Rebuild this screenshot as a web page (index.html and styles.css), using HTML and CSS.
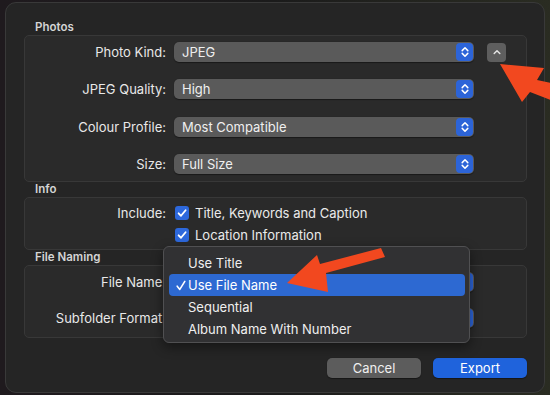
FILE: index.html
```html
<!DOCTYPE html>
<html lang="en">
<head>
    <meta charset="UTF-8">
    <title>Export</title>
    <link rel="stylesheet" href="styles.css">
</head>
<body>
    <div class="dialog">
        <div class="section-title">Photos</div>
        <div class="group photos">
            <div class="row">
                <span class="label">Photo Kind:</span>
                <div class="popup">JPEG<span class="stepper"><svg viewBox="0 0 8 12" width="8" height="12"><path d="M1.2 4.6 L4 1.8 L6.8 4.6 M1.2 7.4 L4 10.2 L6.8 7.4" fill="none" stroke="#fff" stroke-width="1.5" stroke-linecap="round" stroke-linejoin="round"/></svg></span></div>
                <div class="disclosure"><svg viewBox="0 0 8 6" width="8" height="6"><path d="M1.2 4.5 L4 1.7 L6.8 4.5" fill="none" stroke="#e4e4e4" stroke-width="1.5" stroke-linecap="round" stroke-linejoin="round"/></svg></div>
            </div>
            <div class="row">
                <span class="label">JPEG Quality:</span>
                <div class="popup">High<span class="stepper"><svg viewBox="0 0 8 12" width="8" height="12"><path d="M1.2 4.6 L4 1.8 L6.8 4.6 M1.2 7.4 L4 10.2 L6.8 7.4" fill="none" stroke="#fff" stroke-width="1.5" stroke-linecap="round" stroke-linejoin="round"/></svg></span></div>
            </div>
            <div class="row">
                <span class="label">Colour Profile:</span>
                <div class="popup">Most Compatible<span class="stepper"><svg viewBox="0 0 8 12" width="8" height="12"><path d="M1.2 4.6 L4 1.8 L6.8 4.6 M1.2 7.4 L4 10.2 L6.8 7.4" fill="none" stroke="#fff" stroke-width="1.5" stroke-linecap="round" stroke-linejoin="round"/></svg></span></div>
            </div>
            <div class="row">
                <span class="label">Size:</span>
                <div class="popup">Full Size<span class="stepper"><svg viewBox="0 0 8 12" width="8" height="12"><path d="M1.2 4.6 L4 1.8 L6.8 4.6 M1.2 7.4 L4 10.2 L6.8 7.4" fill="none" stroke="#fff" stroke-width="1.5" stroke-linecap="round" stroke-linejoin="round"/></svg></span></div>
            </div>
        </div>

        <div class="section-title">Info</div>
        <div class="group info">
            <div class="row check-row">
                <span class="label">Include:</span>
                <span class="checkbox"><svg viewBox="0 0 14 14" width="14" height="14"><path d="M3.6 7.3 L6 9.8 L10.6 4.2" fill="none" stroke="#fff" stroke-width="1.8" stroke-linecap="round" stroke-linejoin="round"/></svg></span>
                <span class="check-text">Title, Keywords and Caption</span>
            </div>
            <div class="row check-row">
                <span class="label"></span>
                <span class="checkbox"><svg viewBox="0 0 14 14" width="14" height="14"><path d="M3.6 7.3 L6 9.8 L10.6 4.2" fill="none" stroke="#fff" stroke-width="1.8" stroke-linecap="round" stroke-linejoin="round"/></svg></span>
                <span class="check-text">Location Information</span>
            </div>
        </div>

        <div class="section-title">File Naming</div>
        <div class="group naming">
            <div class="row">
                <span class="label">File Name:</span>
                <!-- value hidden under the open menu -->
                <div class="popup"><span class="stepper"><svg viewBox="0 0 8 12" width="8" height="12"><path d="M1.2 4.6 L4 1.8 L6.8 4.6 M1.2 7.4 L4 10.2 L6.8 7.4" fill="none" stroke="#fff" stroke-width="1.5" stroke-linecap="round" stroke-linejoin="round"/></svg></span></div>
            </div>
            <div class="row">
                <span class="label">Subfolder Format:</span>
                <div class="popup"><span class="stepper"><svg viewBox="0 0 8 12" width="8" height="12"><path d="M1.2 4.6 L4 1.8 L6.8 4.6 M1.2 7.4 L4 10.2 L6.8 7.4" fill="none" stroke="#fff" stroke-width="1.5" stroke-linecap="round" stroke-linejoin="round"/></svg></span></div>
            </div>
        </div>

        <div class="actions">
            <button class="btn">Cancel</button>
            <button class="btn primary">Export</button>
        </div>

        <!-- open popup menu for File Name -->
        <div class="menu">
            <div class="menu-item">Use Title</div>
            <div class="menu-item selected"><svg class="tick" viewBox="0 0 10 11" width="10" height="11"><path d="M1.2 6.2 L3.8 9.4 L8.8 1.4" fill="none" stroke="#fff" stroke-width="1.6" stroke-linecap="round" stroke-linejoin="round"/></svg>Use File Name</div>
            <div class="menu-item">Sequential</div>
            <div class="menu-item">Album Name With Number</div>
        </div>
    </div>

    <!-- annotation arrows drawn over the screenshot -->
    <svg class="arrows" viewBox="0 0 550 395" width="550" height="395">
        <polygon points="500,64 544,68 537,80 556,84 556,102 530,92 522,102" fill="#f2481f"/>
        <polygon points="287,283 317,255 320,264 381,248 385,257 326,273 328,292" fill="#f2481f"/>
    </svg>
</body>
</html>
```

FILE: styles.css
```css
body {
    margin: 0;
    width: 550px;
    height: 395px;
    overflow: hidden;
    position: relative;
    background: linear-gradient(90deg, #1f1a1e 0%, #1b1b1b 50%, #2a2c22 100%);
    font-family: 'Inter', 'Liberation Sans', sans-serif;
    font-size: 13px;
    color: #e8e8e8;
}
.dialog {
    position: relative;
    box-sizing: border-box;
    margin: 2px 0 0 5px;
    width: 540px;
    height: 391px;
    padding: 17px 17px 0 18px;
    background: #252525;
    border: 1px solid #393939;
    border-radius: 11px;
}
.section-title {
    height: 15px;
    line-height: 15px;
    padding-left: 11px;
    font-size: 11.5px;
    font-weight: 600;
    color: #d4d4d4;
}
.group {
    background: #2a2a2a;
    border: 1px solid #383838;
    border-radius: 5px;
    display: flex;
    flex-direction: column;
}
.photos {
    padding: 6px 0 7px;
    gap: 17.3px;
}
.info {
    padding: 8px 0 6px;
    gap: 7px;
}
.naming {
    padding: 6px 0 9px;
    gap: 16px;
}
.row {
    display: flex;
    align-items: center;
    height: 20px;
}
.check-row {
    height: 15px;
}
.label {
    width: 141px;
    text-align: right;
    margin-right: 8px;
    white-space: nowrap;
}
.popup {
    position: relative;
    box-sizing: border-box;
    width: 300px;
    height: 20px;
    line-height: 20px;
    padding-left: 8px;
    background: #5a5a5a;
    border-radius: 5px;
    box-shadow: 0 0.5px 1px rgba(0,0,0,0.4);
    color: #efefef;
}
.stepper {
    position: absolute;
    right: 1px;
    top: 1px;
    width: 17px;
    height: 18px;
    border-radius: 4px;
    background: #2c64d8;
    display: flex;
    align-items: center;
    justify-content: center;
}
.disclosure {
    width: 19px;
    height: 19px;
    margin-left: 13px;
    border-radius: 4px;
    background: #5e5e5e;
    display: flex;
    align-items: center;
    justify-content: center;
}
.checkbox {
    width: 14px;
    height: 14px;
    border-radius: 3px;
    background: #2d68dc;
    margin-left: 1px;
    display: flex;
}
.check-text {
    margin-left: 6px;
    color: #eaeaea;
}
.actions {
    display: flex;
    justify-content: flex-end;
    gap: 12px;
    margin-top: 20px;
}
.btn {
    width: 94px;
    height: 20px;
    padding: 0;
    border: none;
    border-radius: 5px;
    background: #5c5c5c;
    color: #efefef;
    font-family: inherit;
    font-size: 13px;
    box-shadow: 0 0.5px 1px rgba(0,0,0,0.4);
}
.btn.primary {
    background: #1f63dc;
    color: #fff;
}
.menu {
    position: absolute;
    left: 157px;
    top: 243px;
    box-sizing: border-box;
    width: 307px;
    height: 97px;
    padding: 5px 4px 0 5px;
    background: #313133;
    border: 1px solid #505052;
    border-radius: 6px;
    box-shadow: 0 4px 12px rgba(0,0,0,0.45);
}
.menu-item {
    position: relative;
    height: 22px;
    line-height: 22px;
    padding-left: 19px;
    border-radius: 4px;
    color: #efefef;
}
.menu-item.selected {
    background: #2d69d2;
    color: #fff;
}
.tick {
    position: absolute;
    left: 7px;
    top: 6px;
}
.arrows {
    position: absolute;
    left: 0;
    top: 0;
    pointer-events: none;
}
```
